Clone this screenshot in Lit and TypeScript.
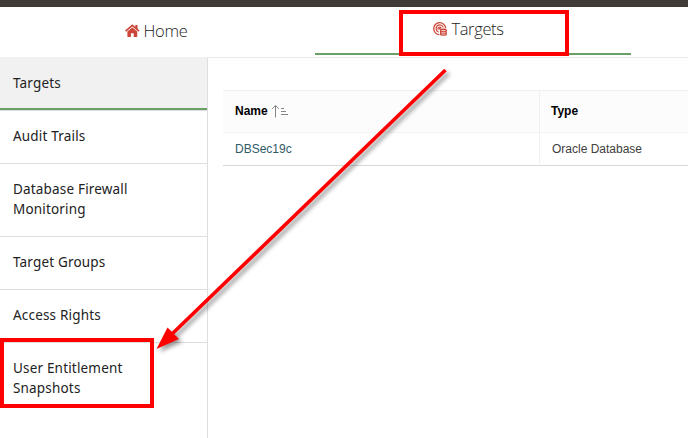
import { LitElement, html, css, svg } from "lit";
import { customElement } from "lit/decorators.js";
import { classMap } from "lit/directives/class-map.js";

const sections = [
  { lines: ["Targets"], active: true },
  { lines: ["Audit Trails"], active: false },
  { lines: ["Database Firewall", "Monitoring"], active: false },
  { lines: ["Target Groups"], active: false },
  { lines: ["Access Rights"], active: false },
  { lines: ["User Entitlement", "Snapshots"], active: false },
];

const homeIcon = svg`
  <path d="M0.6 7.1 L7.3 1.4 L14 7.1" fill="none" stroke="#cb4638" stroke-width="1.7"/>
  <path d="M10.3 1h2.2v4.2l-2.2-1.8z" fill="#cb4638"/>
  <path d="M2.4 7.6 L7.3 3.5 L12.2 7.6V13H8.7V9.2H5.9V13H2.4z" fill="#cb4638"/>`;

const targetIcon = svg`
  <g fill="none" stroke="#cb4638">
    <path d="M6.4 12.7A6 6 0 1 1 12.7 6.1" stroke-width="1.3"/>
    <path d="M5.6 10.1A3.7 3.7 0 1 1 10.3 5.4" stroke-width="1.2"/>
    <path d="M5.3 7.6A1.5 1.5 0 1 1 7.9 5.8L5.8 7.2" stroke-width="1.1"/>
  </g>
  <path d="M7 7.7q0-1.3 3.4-1.3t3.4 1.3v4.8q0 1.3-3.4 1.3t-3.4-1.3z" fill="#cb4638"/>
  <path d="M8.3 8.5h4.2M8.3 10.3h4.2M8.3 12.1h4.2" stroke="#fff" stroke-width=".7" fill="none"/>`;

@customElement("app-root")
export class AppRoot extends LitElement {
  static styles = css`
    :host {
      display: block;
      position: relative;
      width: 688px;
      height: 438px;
      overflow: hidden;
      background: #fff;
      color: #222;
      font-family: "Noto Sans", sans-serif;
    }
    svg { display: block; flex: none; }
    .topbar { height: 7px; background: #403b36; }
    .tabs {
      display: flex;
      box-sizing: border-box;
      height: 51px;
      border-bottom: 1px solid #e9e9e9;
    }
    .tab {
      display: flex;
      justify-content: center;
      box-sizing: border-box;
      width: 316px;
      height: 48px;
      padding-top: 12px;
      gap: 4px;
      font-family: "Open Sans", "Noto Sans", sans-serif;
      font-weight: 350;
      font-size: 16.5px;
      line-height: 24px;
      letter-spacing: -0.35px;
      color: #1c1c1c;
    }
    .tab svg { margin-top: 5px; }
    .tab.home { width: 315px; padding-right: 3px; }
    .tab.current {
      padding-top: 10px;
      padding-right: 9px;
      gap: 4px;
      border-bottom: 2px solid #6a9f68;
    }
    .body { display: flex; height: 380px; }
    .side { width: 207px; border-right: 1px solid #dedede; }
    .item {
      padding: 15px 13px 17px;
      border-bottom: 1px solid #dedede;
      font-size: 13.5px;
      line-height: 20px;
      white-space: nowrap;
      letter-spacing: 0.18px;
    }
    .item:last-child { border-bottom: 0; }
    .item.active {
      background: linear-gradient(#6a9f68, #6a9f68) bottom / 100% 2px no-repeat padding-box, #f1f1f1;
      box-shadow: 0 -1px #f1f1f1;
    }
    .grid {
      flex: 1;
      display: grid;
      grid-template-columns: 316px 1fr;
      grid-template-rows: 42px 33px;
      align-content: start;
      margin: 32px 0 0 15px;
      border-top: 1px solid #f0f0f0;
      font: 12px/16px "Liberation Sans", Arial, sans-serif;
    }
    .cell {
      display: flex;
      align-items: center;
      box-sizing: border-box;
      padding: 0 0 1px 12px;
      border-bottom: 1px solid #d8d8d8;
      color: #404040;
    }
    .cell.head {
      gap: 4px;
      background: #fcfcfc;
      border-bottom-color: #f3f3f3;
      color: #000;
      font-weight: bold;
    }
    .cell.second { border-left: 1px solid #f0f0f0; }
    .head.second { padding-left: 11px; }
    .link { color: #315b68; }
    .frame { position: absolute; box-sizing: border-box; border: 4px solid #f00; }
    .frame.top { left: 399px; top: 10px; width: 170px; height: 46px; }
    .frame.bottom { left: 0; top: 338px; width: 154px; height: 70px; }
    .arrow {
      position: absolute;
      left: 0;
      top: 0;
      filter: drop-shadow(3px 3px 2px rgba(0, 0, 0, 0.4));
    }
  `;

  render() {
    return html`
      <div class="topbar"></div>
      <nav class="tabs">
        <div class="tab home">
          <svg width="15" height="14" viewBox="0 0 15 14">${homeIcon}</svg><span>Home</span>
        </div>
        <div class="tab current">
          <svg width="14" height="14" viewBox="0 0 14 14">${targetIcon}</svg><span>Targets</span>
        </div>
      </nav>
      <div class="body">
        <div class="side">
          ${sections.map(
            (s) => html`<div class=${classMap({ item: true, active: s.active })}>
              ${s.lines.map((l) => html`<div>${l}</div>`)}
            </div>`
          )}
        </div>
        <div class="grid">
          <div class="cell head">
            Name
            <svg width="17" height="14" viewBox="0 0 17 14" fill="none" stroke="#858585">
              <path d="M3.5 13.5V1.5M.2 4.8L3.5 1.5l3.3 3.3M9 4.5h3M9 7.5h5M9 10.5h7" />
            </svg>
          </div>
          <div class="cell head second">Type</div>
          <div class="cell link">DBSec19c</div>
          <div class="cell second">Oracle Database</div>
        </div>
      </div>
      <div class="frame top"></div>
      <div class="frame bottom"></div>
      <svg class="arrow" width="688" height="438" viewBox="0 0 688 438">
        <path d="M445.5 70L172 334" stroke="#f00" stroke-width="3.6" />
        <path d="M156.500 349L167.500 327.500L179 339z" fill="#f00" />
      </svg>
    `;
  }
}
